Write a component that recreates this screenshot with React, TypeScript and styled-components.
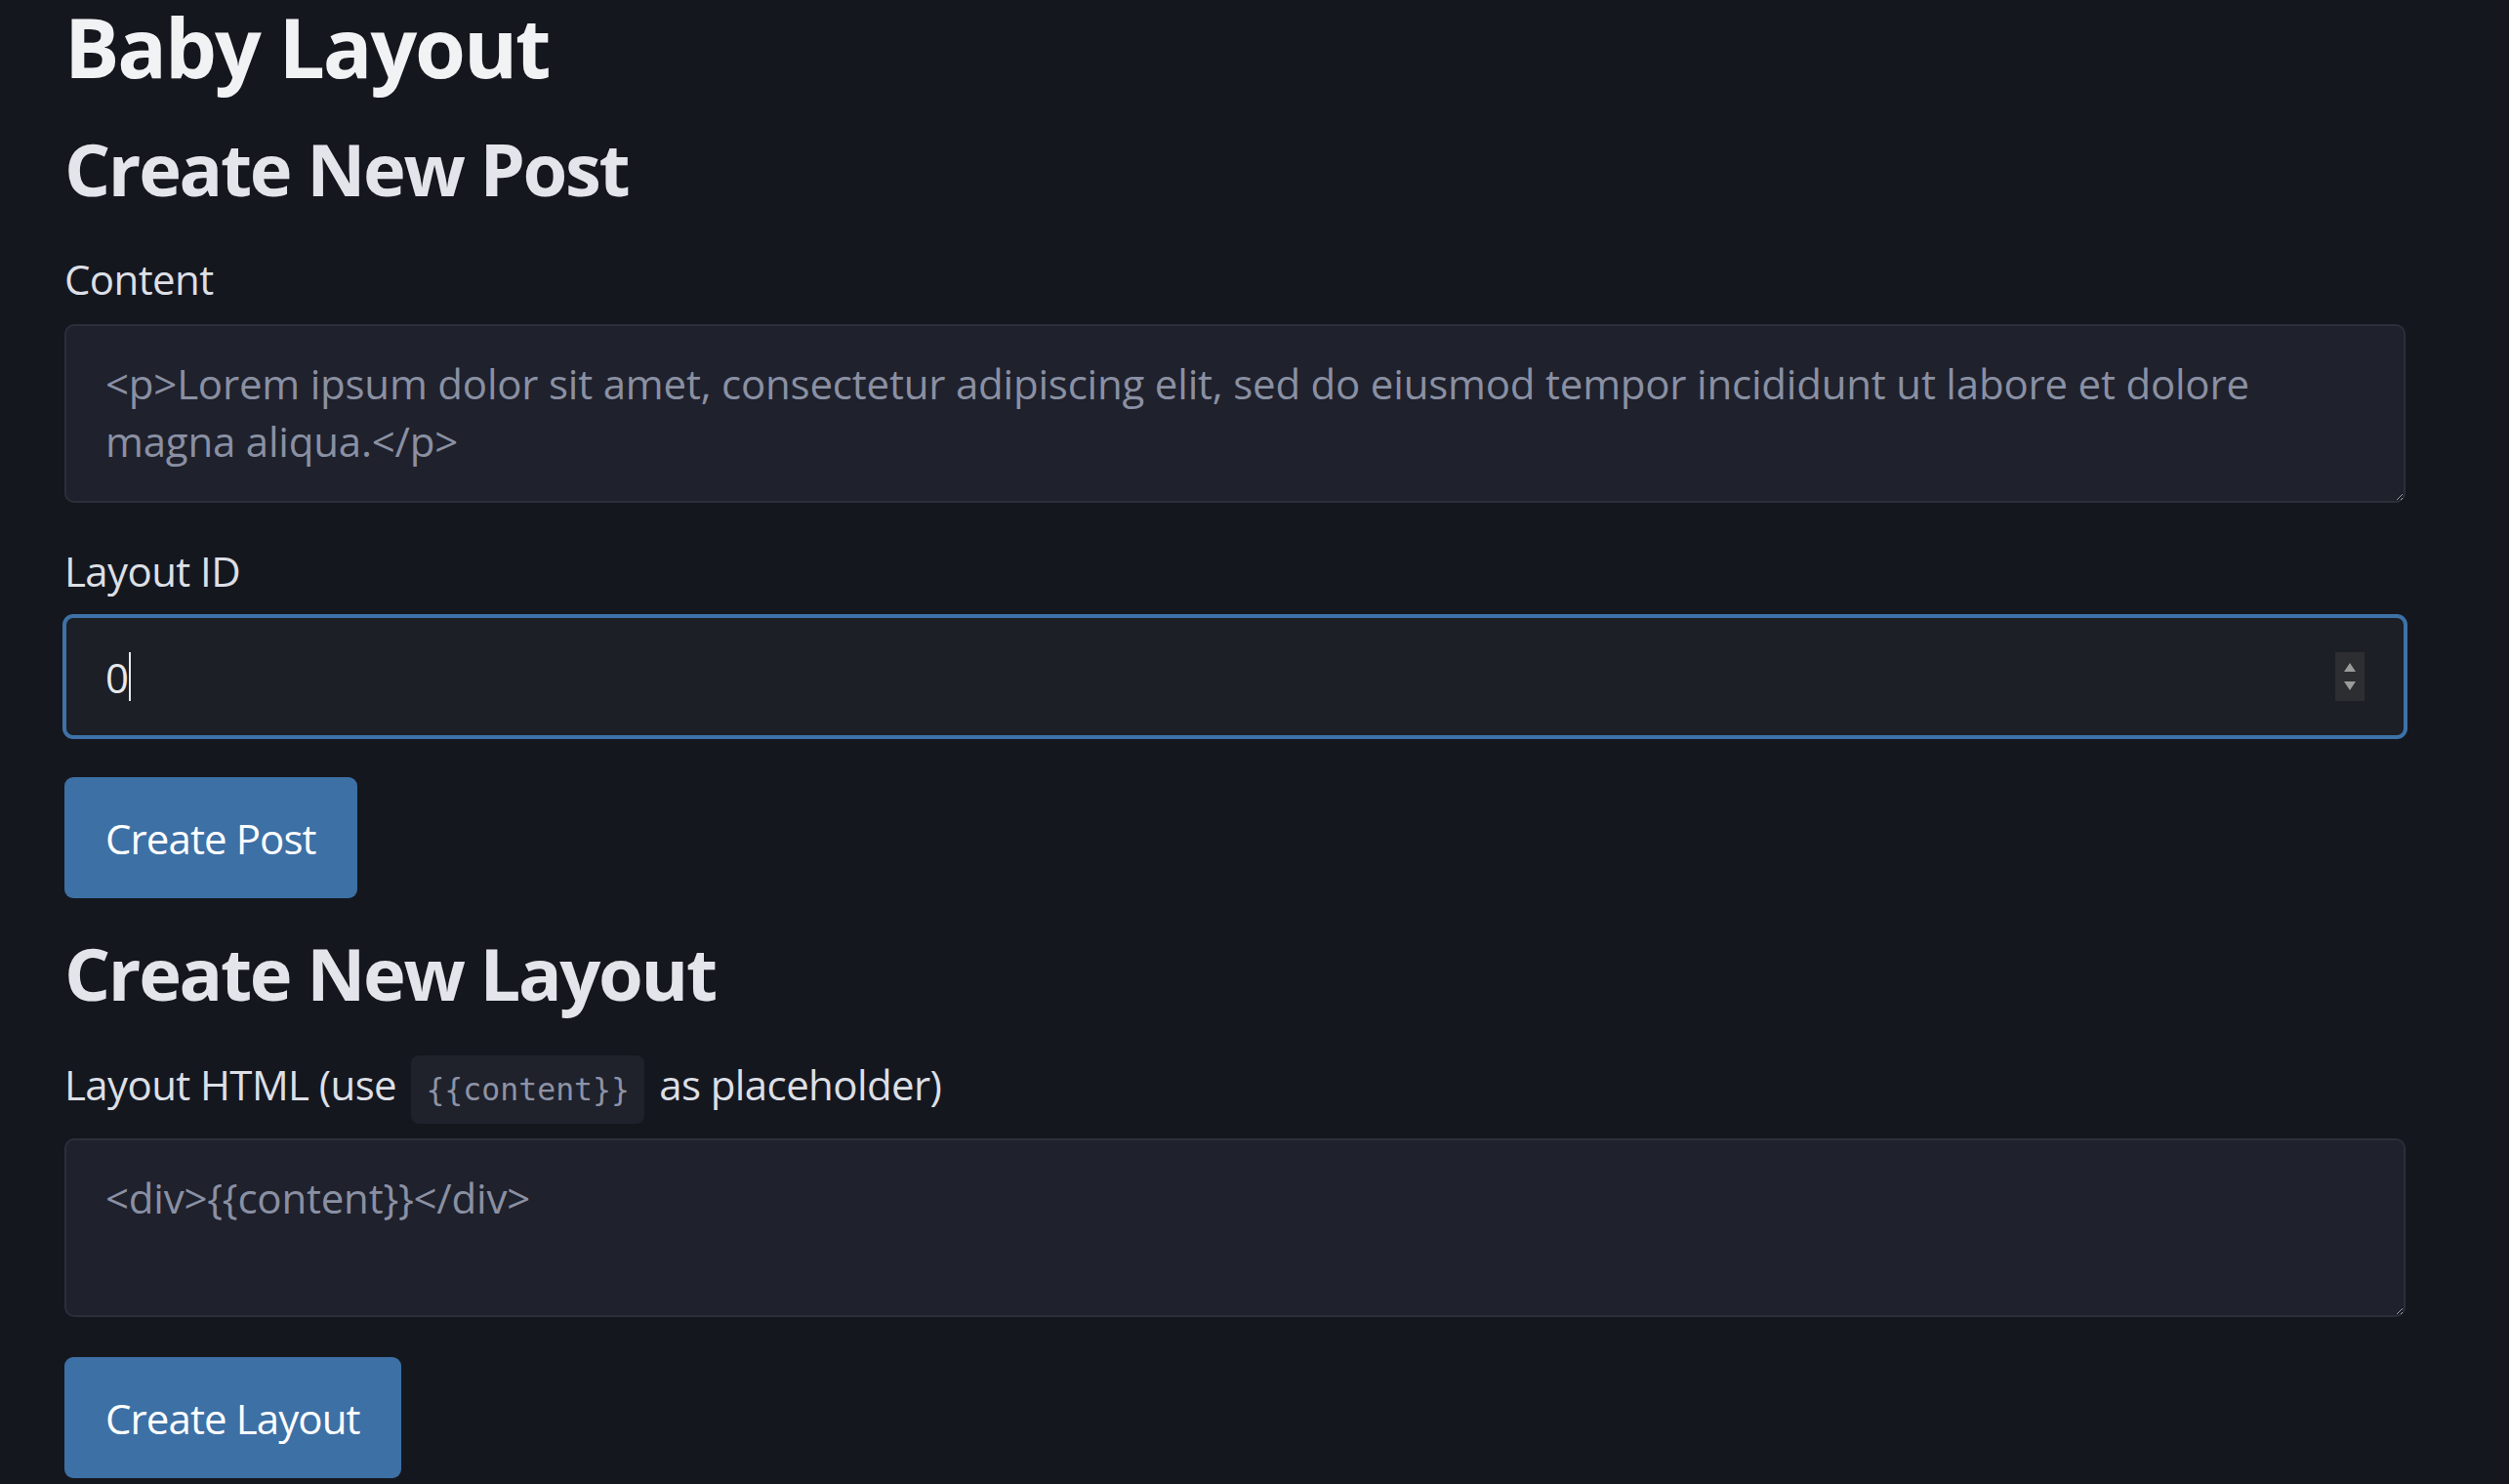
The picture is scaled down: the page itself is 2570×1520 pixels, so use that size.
import React from "react";
import styled, { createGlobalStyle } from "styled-components";

const GlobalStyle = createGlobalStyle`
  html, body {
    margin: 0;
    padding: 0;
    background: #15171f;
  }
  body {
    font-family: "Open Sans", "Noto Sans", "Liberation Sans", sans-serif;
    font-size: 42px;
    line-height: 1.5;
    color: #dcdfe5;
    letter-spacing: -0.6px;
  }
  * { box-sizing: border-box; }
`;

const Page = styled.main`
  display: flex;
  flex-direction: column;
  align-items: stretch;
  width: 2464px;
  padding: 0 0 0 66px;
  min-height: 1520px;
`;

const Title = styled.h1`
  margin: 0 0 32px;
  font-size: 84px;
  line-height: 1.15;
  font-weight: 700;
  color: #f0f2f4;
  letter-spacing: -2.1px;
`;

const Section = styled.section`
  display: flex;
  flex-direction: column;
  align-items: stretch;
`;

const SectionTitle = styled.h2<{ $top?: number }>`
  margin: ${(p) => p.$top ?? 0}px 0 37px;
  font-size: 74px;
  line-height: 1.2;
  font-weight: 700;
  color: #e3e5ea;
  letter-spacing: -2.3px;
`;

const Field = styled.div<{ $after: number }>`
  display: flex;
  flex-direction: column;
  align-items: stretch;
  margin-bottom: ${(p) => p.$after}px;
`;

const Label = styled.label`
  display: block;
  margin-bottom: 15px;
  color: #dcdfe5;
  line-height: 63px;
`;

const Code = styled.code`
  display: inline-block;
  font-family: "DejaVu Sans Mono", "Liberation Mono", monospace;
  font-size: 31.5px;
  line-height: 37px;
  letter-spacing: 0;
  padding: 17px 15px 16px;
  margin: 0 5px;
  border-radius: 8px;
  background: #1f212b;
  color: #8d93a6;
`;

const TextArea = styled.textarea`
  display: block;
  width: 100%;
  height: 183px;
  padding: 30px 40px;
  border: 2px solid #2c2f3a;
  border-radius: 10px;
  background: #1f212c;
  color: #dcdfe5;
  font-family: inherit;
  font-size: 42px;
  line-height: 58.8px;
  letter-spacing: -0.2px;
  resize: vertical;
  outline: none;
  color-scheme: dark;

  &::placeholder {
    color: #8a90a3;
    opacity: 1;
  }
`;

const NumberBox = styled.div`
  display: flex;
  align-items: center;
  height: 124px;
  padding: 0 40px;
  border: 2px solid #3e72a8;
  box-shadow: 0 0 0 2px #3e72a8;
  border-radius: 9px;
  background: #1c1f26;
`;

const NumberValue = styled.span`
  display: flex;
  align-items: center;
  flex: 1;
  color: #e6e8ec;
  font-size: 42px;
`;

const Caret = styled.span`
  display: inline-block;
  width: 2px;
  height: 50px;
  margin-left: 1px;
  background: #e6e8ec;
`;

const Spinner = styled.div`
  display: flex;
  flex-direction: column;
  align-items: center;
  justify-content: space-around;
  width: 30px;
  height: 50px;
  padding: 6px 0;
  background: #2d2e32;
`;

const Arrow = styled.span<{ $down?: boolean }>`
  width: 0;
  height: 0;
  border-left: 6px solid transparent;
  border-right: 6px solid transparent;
  ${(p) =>
    p.$down
      ? "border-top: 9px solid #9b9b9b;"
      : "border-bottom: 9px solid #9b9b9b;"}
`;

const Button = styled.button<{ $top: number }>`
  align-self: flex-start;
  margin-top: ${(p) => p.$top}px;
  height: 124px;
  padding: 0 42px;
  border: none;
  border-radius: 9px;
  background: #3d70a5;
  color: #ffffff;
  font-family: inherit;
  font-size: 42px;
  line-height: 63px;
  letter-spacing: -0.9px;
  cursor: pointer;
`;

export default function App() {
  return (
    <>
      <GlobalStyle />
      <Page>
        <Title>Baby Layout</Title>
        <Section>
          <SectionTitle>Create New Post</SectionTitle>
          <Field $after={38}>
            <Label htmlFor="content">Content</Label>
            <TextArea
              id="content"
              placeholder="<p>Lorem ipsum dolor sit amet, consectetur adipiscing elit, sed do eiusmod tempor incididunt ut labore et dolore magna aliqua.</p>"
            />
          </Field>
          <Field $after={0}>
            <Label>Layout ID</Label>
            <NumberBox>
              <NumberValue>
                0
                <Caret />
              </NumberValue>
              <Spinner>
                <Arrow />
                <Arrow $down />
              </Spinner>
            </NumberBox>
          </Field>
          <Button $top={41}>Create Post</Button>
        </Section>
        <Section>
          <SectionTitle $top={33}>Create New Layout</SectionTitle>
          <Field $after={0}>
            <Label htmlFor="layout">
              Layout HTML (use <Code>{"{{content}}"}</Code> as placeholder)
            </Label>
            <TextArea id="layout" placeholder="<div>{{content}}</div>" />
          </Field>
          <Button $top={41}>Create Layout</Button>
        </Section>
      </Page>
    </>
  );
}
